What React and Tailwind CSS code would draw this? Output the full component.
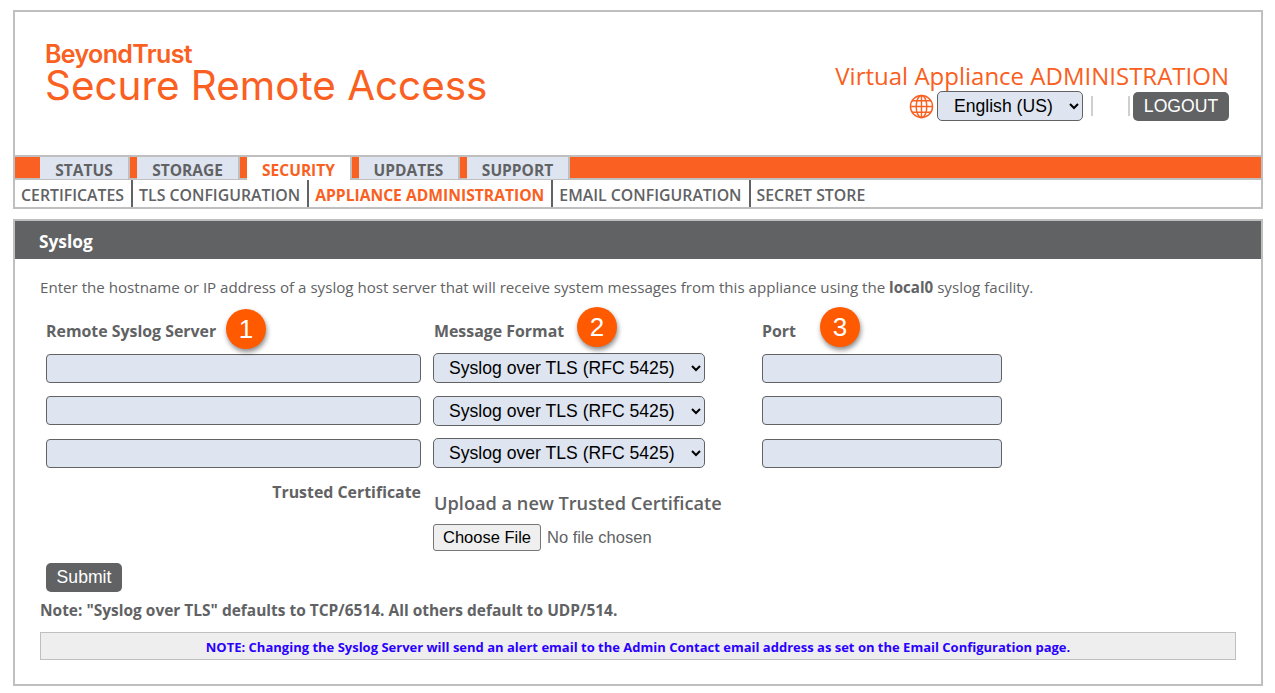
import React from 'react';

const TABS = ['STATUS', 'STORAGE', 'SECURITY', 'UPDATES', 'SUPPORT'];
const TAB_WIDTHS = { STATUS: 'w-[90px]', STORAGE: 'w-[103px]', SECURITY: 'w-[105px]', UPDATES: 'w-[101px]', SUPPORT: 'w-[103px]' };
const SUBNAV = ['CERTIFICATES', 'TLS CONFIGURATION', 'APPLIANCE ADMINISTRATION', 'EMAIL CONFIGURATION', 'SECRET STORE'];
const ROWS = [0, 1, 2];

const arial = "font-['Liberation_Sans',Arial,sans-serif]";
const inputCls = 'block h-[29px] rounded-[4px] border border-[#616264] bg-[#dee5f0]';
const labelCls = 'text-[15.9px] font-bold leading-[20px]';

const Badge = ({ n, className }) => (
  <span className={`absolute flex h-10 w-10 items-center justify-center rounded-full bg-[#ff5a00] text-[26px] font-normal leading-none text-white shadow-[1px_3px_5px_rgba(0,0,0,0.45)] ${arial} ${className}`}>
    {n}
  </span>
);

const GlobeIcon = () => (
  <svg width="25" height="25" viewBox="0 0 26 26" fill="none" stroke="#f96021" strokeWidth="1.5">
    <circle cx="13" cy="13" r="11.5" />
    <ellipse cx="13" cy="13" rx="5.5" ry="11.5" />
    <path d="M13 1.5v23M1.5 13h23M3.2 7h19.6M3.2 19h19.6" />
  </svg>
);

export default function App() {
  return (
    <div className="min-h-[693px] bg-white pl-[13px] pr-[12px] pt-[10px] font-['Open_Sans',sans-serif] text-[#616264]">
      <div className="h-[199px] border-2 border-[#bfbfbf]">
        <div className="flex h-[143px] justify-between pl-[30px] pr-[32px]">
          <div className="pt-[29px] text-[#f96021]">
            <div className="text-[25px] font-semibold leading-[26px] tracking-[-0.65px] font-['Inter',sans-serif]">BeyondTrust</div>
            <div className="text-[40.4px] font-normal leading-[38px] font-['Inter',sans-serif]">Secure Remote Access</div>
          </div>
          <div className="flex flex-col items-end pt-[48px]">
            <div className="text-[24px] font-normal leading-[31px] text-[#f96021]">Virtual Appliance ADMINISTRATION</div>
            <div className="flex items-center">
              <GlobeIcon />
              <select className={`ml-[3px] h-[30px] w-[146px] rounded-[5px] border border-[#616264] bg-[#dee5f0] pl-[12px] text-[17.6px] text-black ${arial}`}>
                <option>English (US)</option>
              </select>
              <span className="ml-2 h-5 w-[2px] bg-[#cfcfcf]" />
              <span className="ml-[35px] h-5 w-[2px] bg-[#cfcfcf]" />
              <button className={`ml-[3px] h-[29px] w-[96px] rounded-[5px] bg-[#616264] text-[17.6px] text-white ${arial}`}>LOGOUT</button>
            </div>
          </div>
        </div>
        <div className="flex h-[25px] gap-[7px] border-y-2 border-y-[#bfbfbf] bg-[#f96021] pl-[25px]">
          {TABS.map((t) => (
            <div
              key={t}
              className={`${TAB_WIDTHS[t]} flex items-end justify-center border-r-2 border-r-[#bfbfbf] text-[15.5px] font-bold ${t === 'SECURITY' ? 'h-[23px] bg-white leading-[20px] text-[#f96021]' : 'h-[22px] bg-[#dee5f0] leading-[18px] text-[#616264]'}`}
            >
              {t}
            </div>
          ))}
        </div>
        <div className="flex h-[27px] items-stretch">
          {SUBNAV.map((s, i) => (
            <div
              key={s}
              className={`flex items-center pl-[6px] pr-[7px] pt-[5px] leading-none ${i < 4 ? 'border-r-2 border-r-[#616264]' : ''} ${i === 2 ? 'text-[15.65px] font-bold text-[#f96021]' : 'text-[15.85px] font-semibold text-[#616264]'}`}
            >
              {s}
            </div>
          ))}
        </div>
      </div>

      <div className="mt-[10px] h-[467px] border-2 border-[#bfbfbf]">
        <div className="flex h-[38px] items-center bg-[#616264] pl-[24px] pt-[3px] text-[17.3px] font-bold text-white">Syslog</div>
        <div className="px-[25px]">
          <p className="pt-[18px] text-[15.12px] leading-[20px]">
            Enter the hostname or IP address of a syslog host server that will receive system messages from this appliance using the <b>local0</b> syslog facility.
          </p>
          <div className="mt-[24px] flex pl-[6px]">
            <div className={`relative w-[375px] ${labelCls}`}>
              Remote Syslog Server
              <Badge n="1" className="left-[180px] -top-[12px]" />
            </div>
            <div className={`relative ml-[12px] w-[272px] pl-[1px] ${labelCls}`}>
              Message Format
              <Badge n="2" className="left-[144px] -top-[14px]" />
            </div>
            <div className={`relative ml-[57px] w-[240px] ${labelCls}`}>
              Port
              <Badge n="3" className="left-[58px] -top-[14px]" />
            </div>
          </div>
          <div className="mt-[12px] flex flex-col gap-[12.5px] pl-[6px]">
            {ROWS.map((r) => (
              <div key={r} className="flex h-[30px] items-center">
                <input className={`${inputCls} w-[375px]`} />
                <select className={`ml-[12px] h-[30px] w-[272px] rounded-[5px] border border-[#616264] bg-[#dee5f0] pl-[11px] text-[17.6px] text-black ${arial}`}>
                  <option>Syslog over TLS (RFC 5425)</option>
                </select>
                <input className={`${inputCls} ml-[57px] w-[240px]`} />
              </div>
            ))}
          </div>
          <div className="mt-[15px] flex pl-[6px]">
            <div className={`-mt-[1px] w-[375px] text-right ${labelCls}`}>Trusted Certificate</div>
            <div className="ml-[12px] pl-[1px]">
              <div className="pt-[8px] text-[18.2px] font-semibold leading-[24px]">Upload a new Trusted Certificate</div>
              <div className={`mt-[9px] -ml-[1px] flex items-center text-[16.5px] ${arial}`}>
                <button className="h-[27px] w-[108px] rounded-[3px] border border-[#767676] bg-[#efefef] text-black">Choose File</button>
                <span className="ml-[6px]">No file chosen</span>
              </div>
            </div>
          </div>
          <button className={`ml-[6px] mt-[12px] block h-[29px] w-[76px] rounded-[5px] bg-[#616264] text-[17.6px] text-white ${arial}`}>Submit</button>
          <p className="mt-[8px] text-[15.47px] font-bold leading-[20px]">Note: "Syslog over TLS" defaults to TCP/6514. All others default to UDP/514.</p>
          <div className="mt-[12px] flex h-[28px] items-center justify-center border border-[#bfbfbf] bg-[#eeeeee] pt-[4px] text-[13px] font-bold text-[#2a00ff]">
            NOTE: Changing the Syslog Server will send an alert email to the Admin Contact email address as set on the Email Configuration page.
          </div>
        </div>
      </div>
    </div>
  );
}
